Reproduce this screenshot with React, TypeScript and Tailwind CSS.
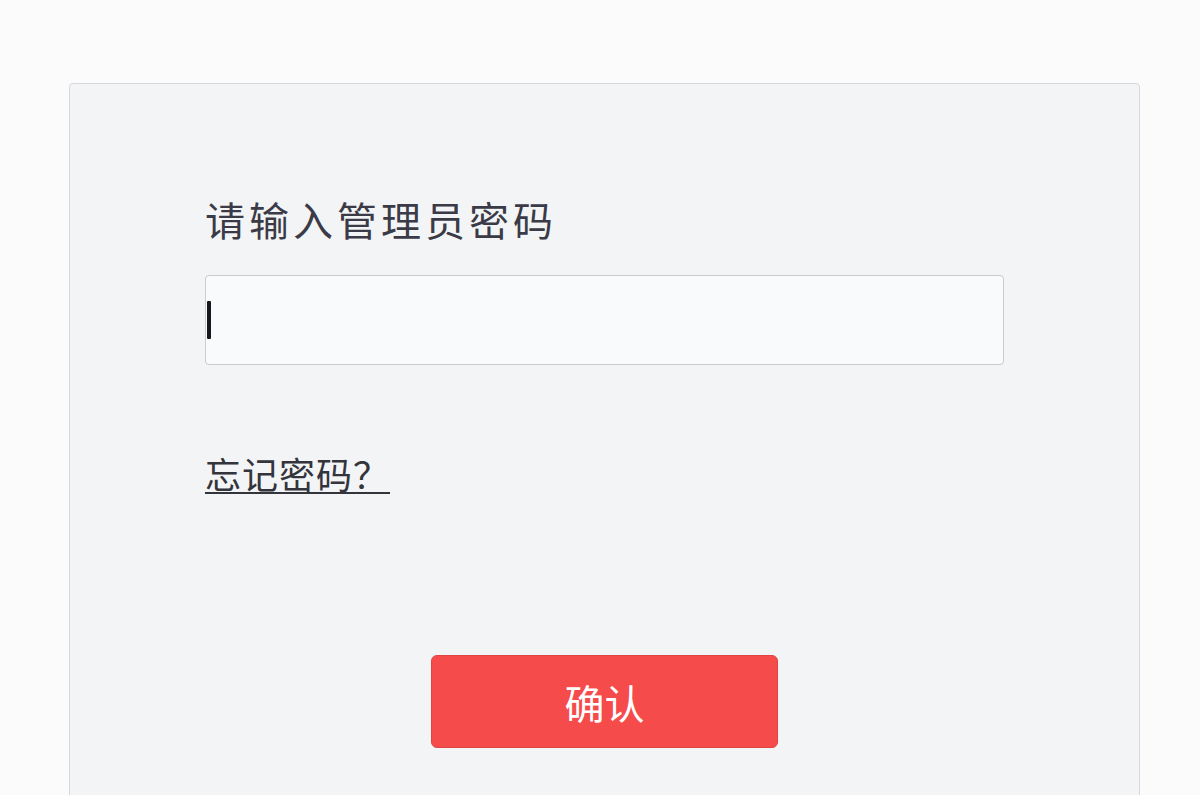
export default function App() {
  return (
    <div
      className="h-[795px] overflow-hidden bg-[#fbfbfc] pt-[83px] pl-[69px] pr-[60px]"
      style={{ fontFamily: '"Noto Sans CJK SC", "Noto Sans", sans-serif' }}
    >
      <div className="h-[760px] w-[1071px] rounded-t-[4px] border border-[#d6d8db] bg-[#f3f4f6] px-[135px] pt-[107px]">
        <h1 className="text-[40px] leading-[56px] tracking-[4px] text-[#3b3b47]">
          请输入管理员密码
        </h1>

        <div className="mt-[28px] flex h-[90px] w-full items-center rounded-[4px] border border-[#c9cbcf] bg-[#f9fafc]">
          <span className="ml-[1px] h-[38px] w-[4px] rounded-[1px] bg-[#16161c]" />
        </div>

        <div className="mt-[86px]">
          <a
            href="#"
            className="text-[36px] leading-[44px] tracking-[1px] text-[#34343c] underline decoration-[1.5px] underline-offset-[3px]"
          >
            忘记密码？
          </a>
        </div>

        <div className="mt-[160px] flex justify-center">
          <button
            type="button"
            className="h-[93px] w-[347px] rounded-[6px] border border-[#e04343] bg-[#f54b4b] text-[40px] text-white"
          >
            确认
          </button>
        </div>
      </div>
    </div>
  );
}
